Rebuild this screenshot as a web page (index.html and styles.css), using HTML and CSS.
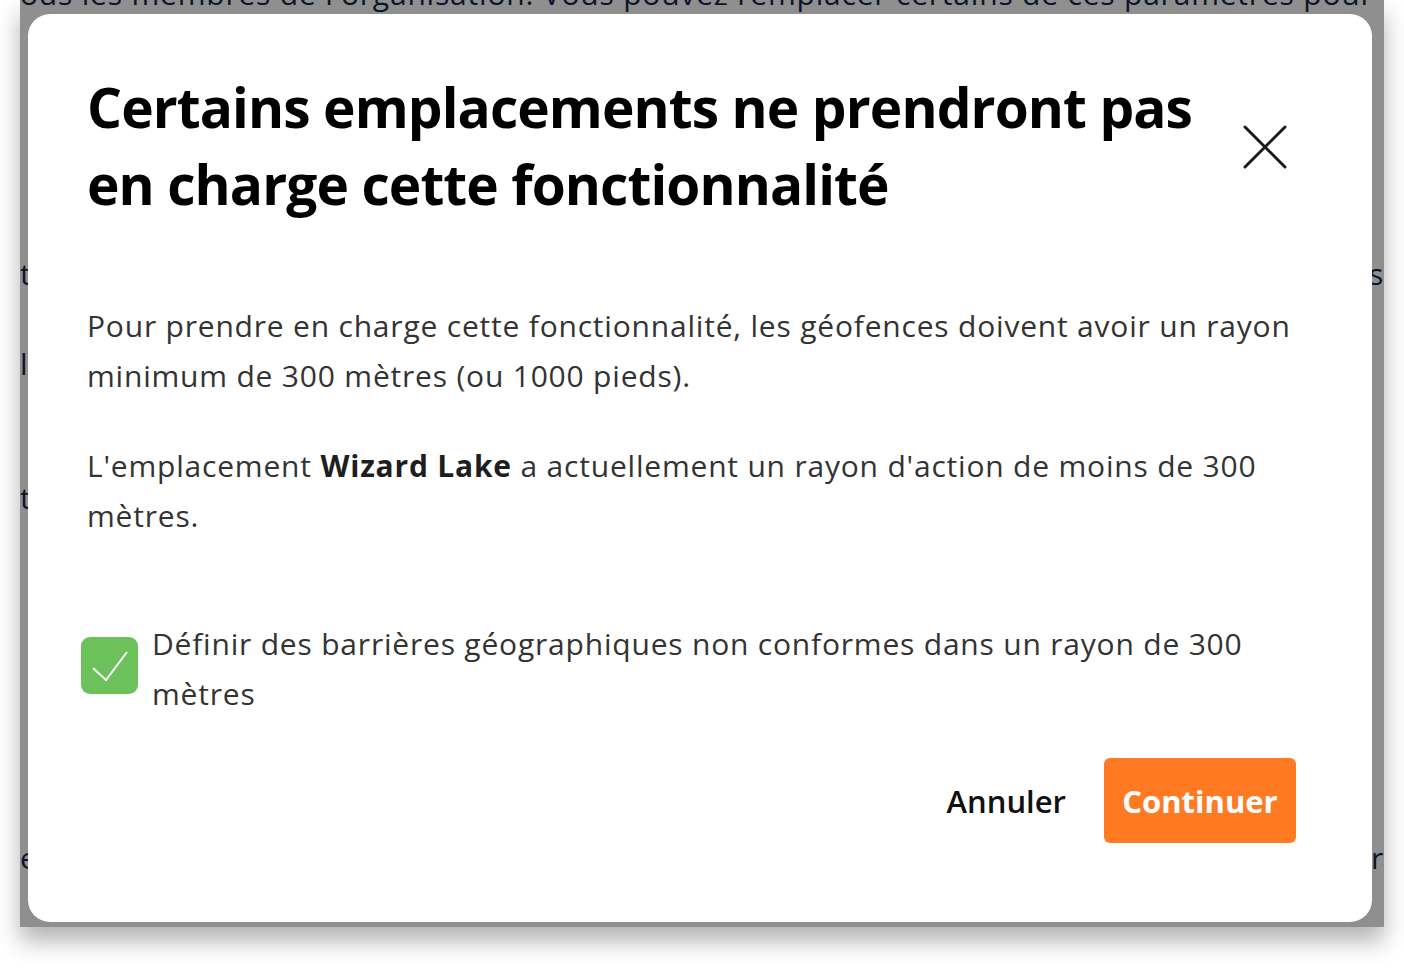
FILE: index.html
```html
<!DOCTYPE html>
<html lang="fr">
<head>
    <meta charset="UTF-8">
    <meta name="viewport" content="width=device-width, initial-scale=1.0">
    <title>Géofences</title>
    <link rel="stylesheet" href="styles.css">
</head>
<body>

<div class="frame">
    <div class="page">
        <p class="page-line top-line">ous les membres de l'organisation. Vous pouvez remplacer certains de ces paramètres pour</p>
        <p class="page-line l1"><span>t</span><span>s</span></p>
        <p class="page-line l2"><span>l</span></p>
        <p class="page-line l3"><span>t</span></p>
        <p class="page-line l4"><span>e</span><span>r</span></p>
    </div>
    <div class="overlay"></div>

    <div class="modal">
        <div class="modal-header">
            <h2>Certains emplacements ne prendront pas en charge cette fonctionnalité</h2>
            <button class="close-button" aria-label="Fermer">
                <svg width="44" height="44" viewBox="0 0 44 44">
                    <path d="M2 2 L42 42 M42 2 L2 42" stroke="#1b1b1b" stroke-width="3" stroke-linecap="round" fill="none"/>
                </svg>
            </button>
        </div>

        <div class="modal-body">
            <p>Pour prendre en charge cette fonctionnalité, les géofences doivent avoir un rayon minimum de 300 mètres (ou 1000 pieds).</p>
            <p>L'emplacement <strong>Wizard Lake</strong> a actuellement un rayon d'action de moins de 300 mètres.</p>
        </div>

        <label class="check-row">
            <span class="checkbox">
                <svg width="57" height="57" viewBox="0 0 57 57">
                    <path d="M12 31 L25 43 L46 15" stroke="#fff" stroke-width="2" fill="none"/>
                </svg>
            </span>
            <span class="check-label">Définir des barrières géographiques non conformes dans un rayon de 300 mètres</span>
        </label>

        <div class="modal-actions">
            <button class="cancel-button">Annuler</button>
            <button class="primary-button">Continuer</button>
        </div>
    </div>
</div>

</body>
</html>
```

FILE: styles.css
```css
/* General Styles */
body {
    margin: 0;
    padding: 0;
    background-color: #fff;
    font-family: "Open Sans", Lato, sans-serif;
    width: 1404px;
    height: 968px;
    overflow: hidden;
}

.frame {
    position: relative;
    margin-left: 20px;
    width: 1364px;
    height: 927px;
    overflow: hidden;
    background-color: #fff;
    box-shadow: 0 14px 22px rgba(0, 0, 0, 0.3);
}

/* page behind the dialog */
.page {
    color: #17284a;
    font-size: 30px;
    letter-spacing: 0.8px;
}

.page-line {
    margin: 0;
    white-space: nowrap;
    line-height: 34px;
    display: flex;
    justify-content: space-between;
}

.top-line {
    margin-top: -23px;
}

.l1 {
    margin-top: 246px;
}

.l2 {
    margin-top: 56px;
}

.l3 {
    margin-top: 100px;
}

.l4 {
    margin-top: 326px;
}

.overlay {
    position: absolute;
    top: 0;
    left: 0;
    width: 100%;
    height: 100%;
    background-color: rgba(0, 0, 0, 0.44);
}

/* Dialog */
.modal {
    position: absolute;
    left: 8px;
    top: 14px;
    width: 1344px;
    height: 908px;
    box-sizing: border-box;
    background-color: #fff;
    border-radius: 22px;
    padding: 54px 76px 0 59px;
    display: flex;
    flex-direction: column;
}

.modal-header {
    display: flex;
    justify-content: space-between;
    align-items: flex-start;
}

.modal-header h2 {
    margin: 0;
    width: 1140px;
    font-size: 55px;
    font-weight: 700;
    letter-spacing: -0.9px;
    line-height: 77px;
    color: #000;
}

.close-button {
    background: none;
    border: none;
    padding: 0;
    margin-top: 57px;
    margin-right: 9px;
    cursor: pointer;
}

.close-button svg {
    display: block;
}

.modal-body {
    margin-top: 79px;
    margin-right: -24px;
    color: #333;
    font-size: 30px;
    letter-spacing: 0.8px;
    line-height: 50px;
}

.modal-body p {
    margin: 0 0 40px 0;
}

.modal-body strong {
    color: #1e1e1e;
    font-weight: 700;
}

.check-row {
    display: flex;
    align-items: center;
    gap: 14px;
    margin-top: 38px;
    margin-left: -6px;
    color: #333;
    font-size: 30px;
    letter-spacing: 0.8px;
    line-height: 50px;
}

.checkbox {
    flex: none;
    width: 57px;
    height: 57px;
    margin-top: -7px;
    border-radius: 9px;
    background-color: #6cc15b;
}

.checkbox svg {
    display: block;
}

.check-label {
    flex: 1;
}

.modal-actions {
    display: flex;
    justify-content: flex-end;
    align-items: center;
    gap: 38px;
    margin-top: 39px;
}

.modal-actions button {
    font-family: inherit;
    border: none;
    cursor: pointer;
}

.cancel-button {
    background: none;
    color: #111;
    font-size: 31px;
    font-weight: 600;
    padding: 0;
}

.primary-button {
    background-color: #ff7a22;
    color: #fff;
    font-size: 31px;
    font-weight: 700;
    width: 192px;
    height: 85px;
    border-radius: 6px;
}
```
